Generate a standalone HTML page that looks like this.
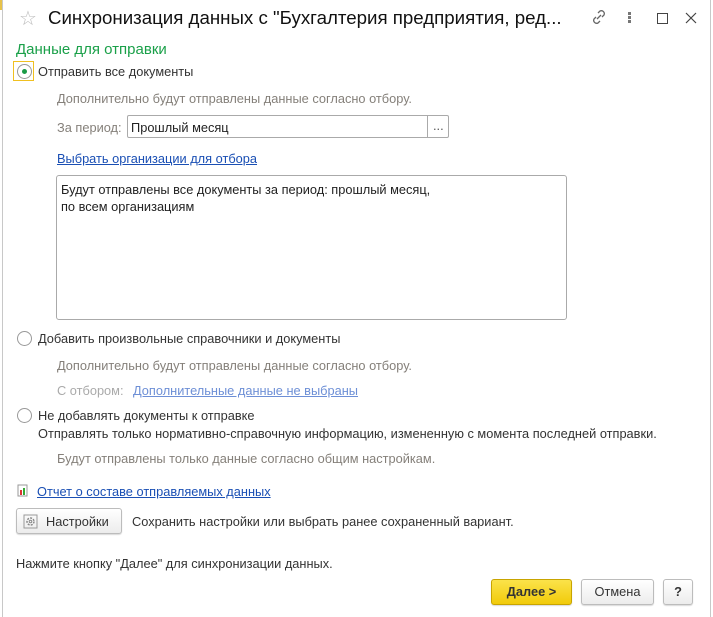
<!DOCTYPE html>
<html><head><meta charset="utf-8"><style>
body{margin:0;width:713px;height:617px;background:#fff;font-family:"Liberation Sans",Arial,sans-serif;font-size:12.8px;color:#333;position:relative;overflow:hidden}
.a{position:absolute;white-space:nowrap}
.g{color:#85807a}
.l{color:#1a4fb4;text-decoration:underline}
.rad{position:absolute;width:13px;height:13px;border:1px solid #999;border-radius:50%;background:#fff}
.btn{position:absolute;border:1px solid #bcbcbc;border-radius:3px;background:linear-gradient(#fff,#ececec);box-shadow:0 1px 1px rgba(0,0,0,.15);text-align:center;box-sizing:border-box}
</style></head><body>
<div class="a" style="left:2px;top:0;width:1px;height:617px;background:#c8c8c8"></div>
<div class="a" style="left:0;top:0;width:2px;height:10px;background:#e7c24a"></div>
<div class="a" style="left:710px;top:0;width:1px;height:617px;background:#c8c8c8"></div>
<div class="a" style="left:19px;top:6px;font-size:20px;color:#bbb">☆</div>
<div class="a" style="left:48px;top:7px;font-size:18.7px;color:#111">Синхронизация данных с "Бухгалтерия предприятия, ред...</div>
<svg class="a" style="left:590px;top:8px" width="18" height="18" viewBox="0 0 18 18"><g fill="none" stroke="#666" stroke-width="1.3"><path d="M8 5l2-2a3 3 0 014 4l-2 2M10 13l-2 2a3 3 0 01-4-4l2-2M7 11l4-4"/></g></svg>
<div class="a" style="left:628px;top:12px;width:3px;height:3px;background:#777;box-shadow:0 4px #777,0 8px #777"></div>
<div class="a" style="left:657px;top:13px;width:9px;height:9px;border:1.3px solid #444"></div>
<svg class="a" style="left:685px;top:12px" width="12" height="12"><path d="M1 1l10 10M11 1L1 11" stroke="#444" stroke-width="1.2"/></svg>
<div class="a" style="left:16px;top:41px;font-size:15px;color:#1aa049">Данные для отправки</div>
<div class="a" style="left:13px;top:61px;width:21px;height:20px;border:1px solid #f0c020;box-sizing:border-box"></div>
<div class="rad" style="left:17px;top:64px"></div>
<div class="a" style="left:22px;top:69px;width:5px;height:5px;border-radius:50%;background:#1a9a46"></div>
<div class="a" style="left:38px;top:64px">Отправить все документы</div>
<div class="a g" style="left:57px;top:91px">Дополнительно будут отправлены данные согласно отбору.</div>
<div class="a g" style="left:57px;top:120px">За период:</div>
<div class="a" style="left:127px;top:115px;width:322px;height:23px;border:1px solid #aaa;border-radius:2px;box-sizing:border-box"></div>
<div class="a" style="left:427px;top:115px;width:1px;height:23px;background:#aaa"></div>
<div class="a" style="left:433px;top:118px;color:#555">...</div>
<div class="a" style="left:131px;top:120px;color:#222">Прошлый месяц</div>
<div class="a l" style="left:57px;top:151px">Выбрать организации для отбора</div>
<div class="a" style="left:56px;top:175px;width:511px;height:145px;border:1px solid #aaa;border-radius:3px;box-sizing:border-box"></div>
<div class="a" style="left:61px;top:181px;line-height:17px;color:#222">Будут отправлены все документы за период: прошлый месяц,<br>по всем организациям</div>
<div class="rad" style="left:17px;top:331px"></div>
<div class="a" style="left:38px;top:331px">Добавить произвольные справочники и документы</div>
<div class="a g" style="left:57px;top:358px">Дополнительно будут отправлены данные согласно отбору.</div>
<div class="a" style="left:57px;top:383px;color:#aaa">С отбором:</div>
<div class="a" style="left:133px;top:383px;color:#6d8fd6;text-decoration:underline">Дополнительные данные не выбраны</div>
<div class="rad" style="left:17px;top:408px"></div>
<div class="a" style="left:38px;top:408px">Не добавлять документы к отправке</div>
<div class="a" style="left:38px;top:426px">Отправлять только нормативно-справочную информацию, измененную с момента последней отправки.</div>
<div class="a g" style="left:57px;top:451px">Будут отправлены только данные согласно общим настройкам.</div>
<svg class="a" style="left:17px;top:484px" width="12" height="13"><rect x="1" y="1" width="9" height="11" fill="#fff" stroke="#999"/><rect x="3" y="6" width="2" height="5" fill="#d33"/><rect x="6" y="4" width="2" height="7" fill="#3a3"/></svg>
<div class="a l" style="left:37px;top:484px">Отчет о составе отправляемых данных</div>
<div class="btn" style="left:16px;top:508px;width:106px;height:26px"></div>
<svg class="a" style="left:23px;top:514px" width="15" height="15"><rect x="1" y="1" width="13" height="13" fill="none" stroke="#999"/><circle cx="7.5" cy="7.5" r="3.5" fill="none" stroke="#888" stroke-width="1.5" stroke-dasharray="2 1.2"/><circle cx="7.5" cy="7.5" r="1.3" fill="none" stroke="#888"/></svg>
<div class="a" style="left:46px;top:514px">Настройки</div>
<div class="a" style="left:132px;top:514px">Сохранить настройки или выбрать ранее сохраненный вариант.</div>
<div class="a" style="left:16px;top:556px">Нажмите кнопку "Далее" для синхронизации данных.</div>
<div class="btn" style="left:491px;top:579px;width:81px;height:26px;background:linear-gradient(#fbe34a,#f1cb0a);border-color:#c8a400;font-weight:bold;line-height:24px;color:#333">Далее &gt;</div>
<div class="btn" style="left:581px;top:579px;width:73px;height:26px;line-height:24px">Отмена</div>
<div class="btn" style="left:663px;top:579px;width:30px;height:26px;line-height:24px;font-weight:bold">?</div>
</body></html>
